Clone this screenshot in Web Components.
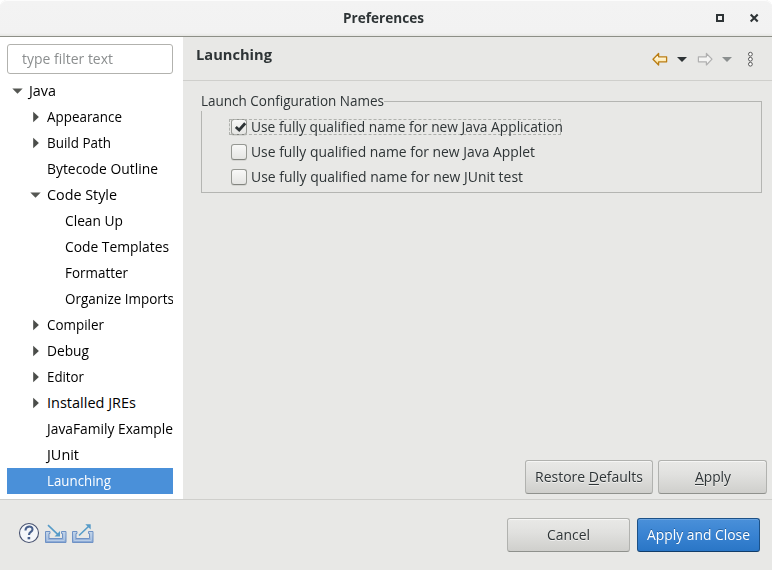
<!DOCTYPE html>
<html lang="en"><head><meta charset="utf-8"><title>Preferences</title>
<style>
html,body{margin:0;width:772px;height:570px;overflow:hidden;background:#fff}
body{font:14.5px/20px "Open Sans","Noto Sans",sans-serif;color:#2e3436}
</style></head><body>
<pref-window></pref-window>
<script>
const define=(name,html,ready)=>customElements.define(name,class extends HTMLElement{
  connectedCallback(){
    if(!this.shadowRoot){this.attachShadow({mode:'open'}).innerHTML=html;}
    if(ready)ready(this,this.shadowRoot);
  }
});

/* One line of text condensed to a given width */
define('ui-text',`<style>:host{display:inline-block;white-space:nowrap;flex:none;height:20px;line-height:20px}
span{display:inline-block;transform-origin:0 50%;white-space:nowrap}</style><span><slot></slot></span>`,(el,root)=>{
  const w=+el.getAttribute('w'),s=root.querySelector('span');
  el.style.width=w+'px';
  s.style.transform=`scaleX(${w/s.getBoundingClientRect().width})`;
});

define('title-bar',`<style>:host{display:flex;box-sizing:border-box;height:37px;background:linear-gradient(#fff 0,#fff 1px,#f3f3f3 1px,#f2f2f2 33px,#e6e6e3 36px);border-bottom:1px solid #8d8f87;border-radius:7px 7px 0 0;align-items:center;font-weight:700;font-size:14px;padding:0 10px 0 342.5px;box-shadow:inset 0 1px #fcfcfc}
svg{margin-left:auto}</style><ui-text w="81">Preferences</ui-text>
<svg width="48" height="12"><path d="M3 3h6v6H3z" fill="none" stroke="#2e3436" stroke-width="2"/><path d="M36.7 2.5l7 7m0-7l-7 7" stroke="#2e3436" stroke-width="2.1"/></svg>`);

define('filter-box',`<style>:host{display:flex;align-items:center;box-sizing:border-box;height:30px;padding-left:14px;border:1px solid #b2b2ae;border-radius:3px;background:#fff;color:#8b8e8f}</style><ui-text w="91"><slot></slot></ui-text>`);

define('tree-item',`<style>:host{display:flex;align-items:center;height:26px;color:#000}
:host([selected]){background:#4a90d9;color:#fff}
.a{width:12px;height:12px;margin-right:5px;flex:none}</style>
<svg class="a" viewBox="0 0 12 12"></svg><ui-text></ui-text>`,(el,root)=>{
  el.style.paddingLeft=(5+18*(+el.getAttribute('level')||0))+'px';
  const st=el.getAttribute('state');
  root.querySelector('svg').innerHTML=st==='open'?'<path d="M.3 3.5h10.4L5.5 8.8z" fill="#555753"/>':st==='closed'?'<path d="M3.2 .8v10.4L8.9 6z" fill="#4b4d4a"/>':'';
  const t=document.createElement('ui-text');t.setAttribute('w',el.getAttribute('w'));t.textContent=el.getAttribute('label');
  root.querySelector('ui-text').replaceWith(t);
});

define('pref-tree',`<style>:host{display:flex;flex-direction:column;box-sizing:border-box;width:183px;height:462px;padding:7px 10px 0 7px;background:#fff}
div{margin-top:4px;overflow:hidden}</style>
<filter-box>type filter text</filter-box><div></div>`,(el,root)=>{
  const rows=[['Java',0,27,'open'],['Appearance',1,75,'closed'],['Build Path',1,64,'closed'],['Bytecode Outline',1,111],['Code Style',1,70,'open'],['Clean Up',2,58],['Code Templates',2,104],['Formatter',2,63],['Organize Imports',2,109],['Compiler',1,57,'closed'],['Debug',1,42,'closed'],['Editor',1,37,'closed'],['Installed JREs',1,89,'closed'],['JavaFamily Example',1,126],['JUnit',1,32],['Launching',1,64]];
  root.querySelector('div').innerHTML=rows.map(([t,l,w,s],i)=>`<tree-item label="${t}" level="${l}" w="${w}" state="${s||''}" ${i===15?'selected':''}></tree-item>`).join('');
});

define('page-header',`<style>:host{display:flex;box-sizing:border-box;height:44px;border-bottom:1px solid #cfcfcc;padding:8px 0 0 13px;font-weight:700;font-size:14px}
svg{margin-left:auto}</style><ui-text w="76"><slot></slot></ui-text>
<svg width="122" height="30" viewBox="650 45 122 30"><defs><linearGradient id="g" x2="0" y2="1"><stop offset="0" stop-color="#fff"/><stop offset="1" stop-color="#ffe18c"/></linearGradient></defs>
<path d="M653 59.2l5.6-5.7v3.3h8v5h-8v3.2z" fill="url(#g)" stroke="#ba7d13" stroke-width="1.3" stroke-linejoin="round"/>
<path d="M677 57h10l-5 5z" fill="#2e3436"/>
<path d="M712 59.2l-5.6-5.7v3.3h-8v5h8v3.2z" fill="#f4f4f3" stroke="#b0b0b0" stroke-width="1.2" stroke-linejoin="round"/>
<path d="M722 57h10l-5 5z" fill="#8b8f8f"/>
<g fill="#fff" stroke="#555" stroke-width="1"><circle cx="750.4" cy="54.2" r="1.9"/><circle cx="750.4" cy="59.2" r="1.9"/><circle cx="750.4" cy="64.2" r="1.9"/></g></svg>`);

define('check-item',`<style>:host{display:flex;align-items:center;height:25px}
i{box-sizing:border-box;display:block;width:16px;height:16px;border:1px solid #969893;border-bottom-color:#82847f;border-radius:3px;background:linear-gradient(#f8f8f7,#e5e5e3);margin-right:4px;box-shadow:0 1px #d5d5d2}
div{display:flex;align-items:center;box-sizing:border-box;height:16px}
svg{display:none}:host([checked]) svg{display:block;margin:1px 0 0 2px}
:host([checked]) div{width:332px;margin-left:-2px;padding-left:2px;outline:1px dashed #b0b2ae;outline-offset:-1px;height:16px}
</style><div><i><svg width="13" height="12"><path d="M1.8 6l3.4 3 6-6.7" fill="none" stroke="#2e3436" stroke-width="2.8"/></svg></i><ui-text></ui-text></div>`,(el,root)=>{
  const t=document.createElement('ui-text');t.setAttribute('w',el.getAttribute('w'));t.textContent=el.getAttribute('label');
  root.querySelector('ui-text').replaceWith(t);
});

define('group-box',`<style>fieldset{box-sizing:border-box;width:561px;height:102px;margin:0;min-width:0;border:1px solid #b4b5b2;padding:3px 0 0 29px;display:block}
legend{padding:0;margin-left:-30px;height:20px}:host{display:block;margin:10px 0 0 18px}</style>
<fieldset><legend><ui-text w="183">Launch Configuration Names</ui-text></legend><slot></slot></fieldset>`);

define('ui-button',`<style>:host{display:flex;align-items:center;justify-content:center;box-sizing:border-box;height:34px;border:1px solid #b1b2af;border-bottom-color:#8f918d;border-radius:3px;background:linear-gradient(#e9e9e7,#e1e1df 40%,#cfcfcc);box-shadow:inset 0 1px #f6f6f5;text-shadow:0 1px #f0f0ef}
:host([primary]){color:#fff;border-color:#1c5187;border-bottom-color:#123d69;background:linear-gradient(#4a90d9,#3983d2 50%,#2a76c6);box-shadow:inset 0 1px #69a4e2;text-shadow:0 -1px #24619f}</style><slot></slot>`);

define('dialog-footer',`<style>:host{display:flex;box-sizing:border-box;height:71px;border-top:1px solid #cfcfcc;padding:18px 12px 0 18px;background:#e8e8e6}
svg{margin-right:auto}ui-button{width:123px}ui-button+ui-button{margin-left:7px}</style>
<svg width="80" height="32" viewBox="18 518 80 32"><defs><linearGradient id="t" x2="0" y2="1"><stop offset="0" stop-color="#c8d8ea"/><stop offset="1" stop-color="#86a5d4"/></linearGradient></defs>
<circle cx="29" cy="533" r="9.5" fill="#f5f7fa" stroke="#475270" stroke-width="1.1"/>
<path d="M25.5 530.6c.1-5.2 7-5.1 7-1.2 0 2.6-3.5 2.5-3.5 5.5" fill="none" stroke="#48608c" stroke-width="2.1"/><path d="M27.6 537h2.6v2.3h-2.6z" fill="#48608c"/>
<g fill="url(#t)" stroke="#6f92c5"><path d="M45.5 531.5h4.5v2h-1v5h13.5v-5h-1v-2h4.5v11h-20.5z"/><path d="M72.5 531.5h4.5v2h-1v5h13.5v-5h-1v-2h4.5v11h-20.5z"/></g>
<g fill="none" stroke="#bcd0e9" stroke-width=".9"><path d="M47.2 533v7.5h17V533M74.2 533v7.5h17V533"/></g>
<g fill="none" stroke="#569bc8" stroke-width="1.6"><path d="M48 525.2l10.5 10"/><path d="M79 535.5l10.5-10"/></g><path d="M60 531v5.6h-5.5zM90.7 524.2v5.2l-5.4-5.2z" fill="#569bc8"/></svg>
<ui-button><ui-text w="43">Cancel</ui-text></ui-button><ui-button primary><ui-text w="103">Apply and Close</ui-text></ui-button>`);

define('pref-window',`<style>:host{display:flex;flex-direction:column;width:772px;height:570px;background:#e8e8e6;border-radius:7px 7px 0 0;overflow:hidden}
.body{display:flex;height:462px}.page{flex:1;display:flex;flex-direction:column}
.actions{display:flex;justify-content:flex-end;gap:5px;margin:auto 5px 5px 0}u{text-underline-offset:2px;text-decoration-thickness:1px}</style>
<title-bar></title-bar><div class="body"><pref-tree></pref-tree><div class="page"><page-header>Launching</page-header>
<group-box><check-item checked w="312" label="Use fully qualified name for new Java Application"></check-item><check-item w="284" label="Use fully qualified name for new Java Applet"></check-item><check-item w="272" label="Use fully qualified name for new JUnit test"></check-item></group-box>
<div class="actions"><ui-button style="width:128px"><ui-text w="108">Restore <u>D</u>efaults</ui-text></ui-button><ui-button style="width:109px"><ui-text w="36"><u>A</u>pply</ui-text></ui-button></div></div></div><dialog-footer></dialog-footer>`);
</script></body></html>
